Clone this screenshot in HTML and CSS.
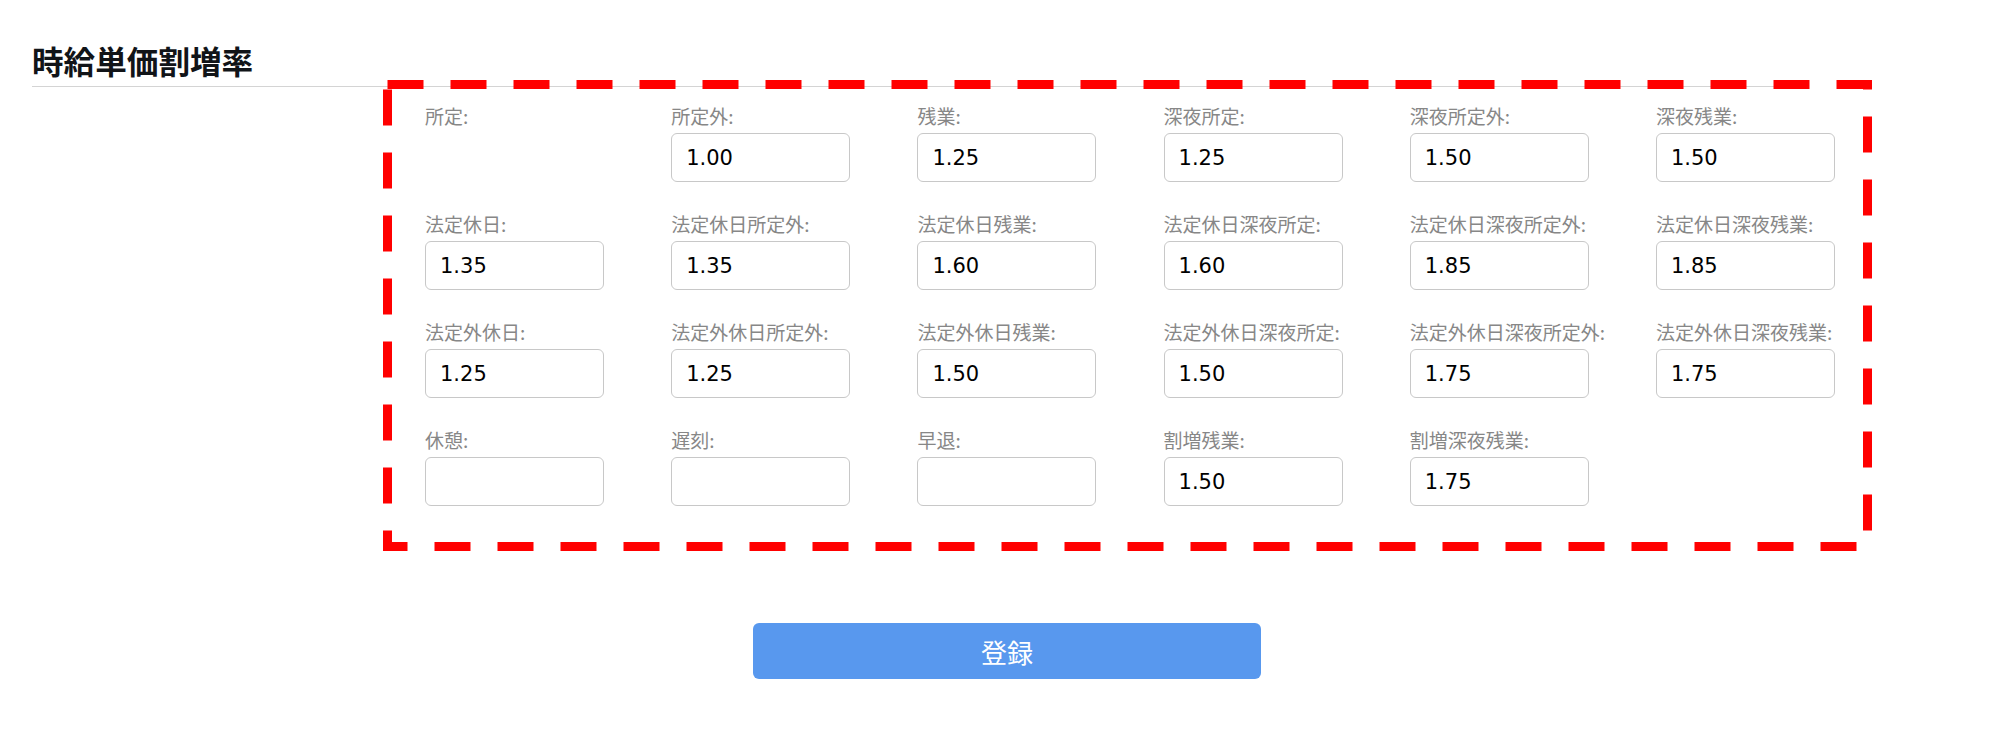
FILE: index.html
```html
<!DOCTYPE html>
<html lang="ja">
<head>
<meta charset="utf-8">
<title>時給単価割増率</title>
<link rel="stylesheet" href="styles.css">
</head>
<body>
<div class="page">
  <div class="header">
    <h2 class="title">時給単価割増率</h2>
  </div>
  <div class="form">
    <svg class="frame" width="1489" height="471" viewBox="0 0 1489 471" aria-hidden="true">
      <rect x="4.5" y="4.5" width="1480" height="462" fill="none" stroke="#ff0000" stroke-width="9" stroke-dasharray="36 27"/>
    </svg>
    <div class="grid">
      <div class="field"><label class="lbl">所定:</label></div>
      <div class="field"><label class="lbl">所定外:</label><input class="inp" type="text" value="1.00"></div>
      <div class="field"><label class="lbl">残業:</label><input class="inp" type="text" value="1.25"></div>
      <div class="field"><label class="lbl">深夜所定:</label><input class="inp" type="text" value="1.25"></div>
      <div class="field"><label class="lbl">深夜所定外:</label><input class="inp" type="text" value="1.50"></div>
      <div class="field"><label class="lbl">深夜残業:</label><input class="inp" type="text" value="1.50"></div>

      <div class="field"><label class="lbl">法定休日:</label><input class="inp" type="text" value="1.35"></div>
      <div class="field"><label class="lbl">法定休日所定外:</label><input class="inp" type="text" value="1.35"></div>
      <div class="field"><label class="lbl">法定休日残業:</label><input class="inp" type="text" value="1.60"></div>
      <div class="field"><label class="lbl">法定休日深夜所定:</label><input class="inp" type="text" value="1.60"></div>
      <div class="field"><label class="lbl">法定休日深夜所定外:</label><input class="inp" type="text" value="1.85"></div>
      <div class="field"><label class="lbl">法定休日深夜残業:</label><input class="inp" type="text" value="1.85"></div>

      <div class="field"><label class="lbl">法定外休日:</label><input class="inp" type="text" value="1.25"></div>
      <div class="field"><label class="lbl">法定外休日所定外:</label><input class="inp" type="text" value="1.25"></div>
      <div class="field"><label class="lbl">法定外休日残業:</label><input class="inp" type="text" value="1.50"></div>
      <div class="field"><label class="lbl">法定外休日深夜所定:</label><input class="inp" type="text" value="1.50"></div>
      <div class="field"><label class="lbl">法定外休日深夜所定外:</label><input class="inp" type="text" value="1.75"></div>
      <div class="field"><label class="lbl">法定外休日深夜残業:</label><input class="inp" type="text" value="1.75"></div>

      <div class="field"><label class="lbl">休憩:</label><input class="inp" type="text" value=""></div>
      <div class="field"><label class="lbl">遅刻:</label><input class="inp" type="text" value=""></div>
      <div class="field"><label class="lbl">早退:</label><input class="inp" type="text" value=""></div>
      <div class="field"><label class="lbl">割増残業:</label><input class="inp" type="text" value="1.50"></div>
      <div class="field"><label class="lbl">割増深夜残業:</label><input class="inp" type="text" value="1.75"></div>
    </div>
  </div>
  <div class="actions">
    <button class="btn" type="button">登録</button>
  </div>
</div>
</body>
</html>
```

FILE: styles.css
```css
html, body {
  margin: 0;
  padding: 0;
  background: #ffffff;
}

body {
  font-family: "Noto Sans CJK JP", "Noto Sans", sans-serif;
  color: #111;
}

.page {
  width: 2000px;
}

.header {
  margin-left: 32px;
  width: 1756px;
  padding-top: 40px;
  padding-bottom: 6px;
  border-bottom: 1px solid #d4d4d4;
}

.title {
  margin: 0;
  font-size: 31.6px;
  line-height: 40px;
  font-weight: 700;
  color: #111418;
}

.form {
  position: relative;
  margin-top: 17px;
  margin-left: 425px;
}

.frame {
  position: absolute;
  left: -42px;
  top: -24px;
  z-index: 2;
}

.grid {
  display: grid;
  grid-template-columns: repeat(6, 179px);
  column-gap: 67.2px;
  row-gap: 30px;
  align-items: start;
}

.field {
  display: flex;
  flex-direction: column;
}

.lbl {
  display: block;
  font-size: 19px;
  line-height: 23px;
  color: #878787;
  margin-bottom: 6px;
  white-space: nowrap;
}

.inp {
  box-sizing: border-box;
  width: 179px;
  height: 49px;
  margin: 0;
  padding: 0 14px;
  border: 1px solid #c8c8c8;
  border-radius: 6px;
  background: #fff;
  font-family: "DejaVu Sans", "Noto Sans", sans-serif;
  font-size: 21px;
  color: #000;
  outline: none;
}

.actions {
  margin-top: 117px;
  margin-left: 753px;
}

.btn {
  display: block;
  width: 508px;
  height: 56px;
  border: none;
  border-radius: 6px;
  background: #5898ee;
  color: #ffffff;
  font-family: "Noto Sans CJK JP", sans-serif;
  font-size: 26px;
  cursor: pointer;
  padding: 0;
}
```
